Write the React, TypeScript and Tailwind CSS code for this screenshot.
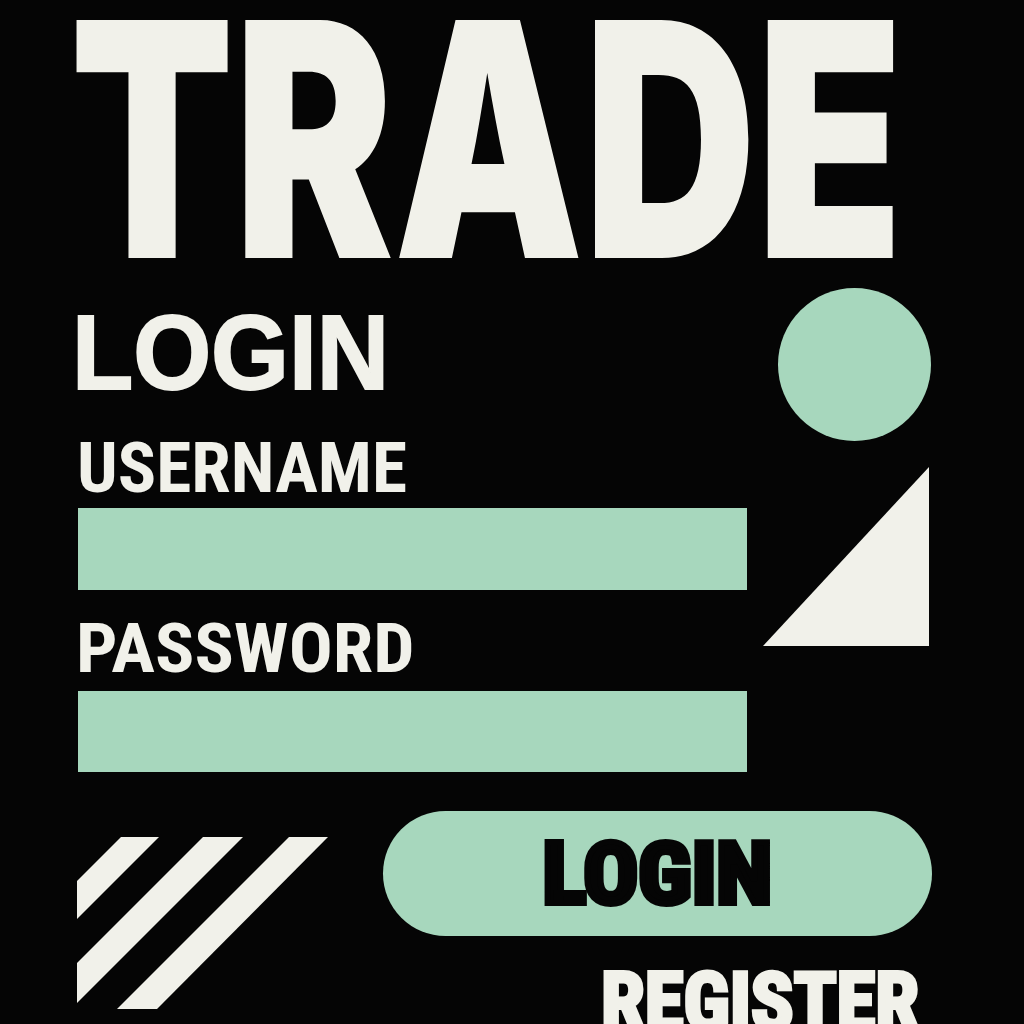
import { useState } from 'react'

const MINT = 'bg-[#a7d7bd]'

function Stripes() {
  return (
    <svg width="252" height="172" viewBox="0 0 252 172" className="shrink-0">
      <polygon points="44,0 82,0 0,82 0,44" fill="#f1f1ea" />
      <polygon points="126,0 166,0 0,166 0,126" fill="#f1f1ea" />
      <polygon points="212,0 251,0 80,172 40,172" fill="#f1f1ea" />
    </svg>
  )
}

export default function App() {
  const [username, setUsername] = useState('')
  const [password, setPassword] = useState('')

  return (
    <div className="w-[1024px] h-[1024px] overflow-hidden bg-[#050505] text-[#f1f1ea] [font-family:Liberation_Sans,Arial,sans-serif] font-bold flex flex-col">
      {/* headline */}
      <div className="h-[265px] pt-[20px] pl-[70px] shrink-0">
        <h1 className="[font-family:Inter,sans-serif] font-black text-[327px] leading-[238px] whitespace-nowrap origin-left scale-x-[0.731]">TRADE</h1>
      </div>

      {/* form + shapes */}
      <div className="h-[515px] flex shrink-0">
        <div className="w-[747px] pl-[78px] flex flex-col shrink-0">
          <h2 className="mt-[47px] -ml-[6px] text-[106px] leading-[80px] whitespace-nowrap origin-left scale-x-[0.945] [-webkit-text-stroke:2px_#f1f1ea]">LOGIN</h2>
          <label className="mt-[50px] -ml-[1px] [font-family:Roboto_Condensed,sans-serif] text-[70px] leading-[52px] whitespace-nowrap origin-left scale-x-[1.02]">USERNAME</label>
          <input
            value={username}
            onChange={e => setUsername(e.target.value)}
            className={`mt-[14px] h-[82px] w-[669px] ${MINT} outline-none px-4 text-[#050505] text-3xl`}
          />
          <label className="mt-[33px] -ml-[2px] [font-family:Roboto_Condensed,sans-serif] text-[69px] leading-[51px] whitespace-nowrap origin-left scale-x-[1.06]">PASSWORD</label>
          <input
            type="password"
            value={password}
            onChange={e => setPassword(e.target.value)}
            className={`mt-[17px] h-[81px] w-[669px] ${MINT} outline-none px-4 text-[#050505] text-3xl`}
          />
        </div>
        <div className="flex flex-col">
          <div className={`mt-[23px] ml-[31px] w-[153px] h-[153px] rounded-full ${MINT}`} />
          <svg width="166" height="179" viewBox="0 0 166 179" className="mt-[26px] ml-[16px]">
            <polygon points="166,0 166,179 0,179" fill="#f1f1ea" />
          </svg>
        </div>
      </div>

      {/* actions */}
      <div className="flex pl-[77px]">
        <div className="mt-[57px]">
          <Stripes />
        </div>
        <div className="ml-[54px] flex flex-col">
          <button className={`mt-[31px] w-[549px] h-[125px] rounded-full ${MINT} text-[#050505] flex items-center justify-center`}>
            <span className="[font-family:Roboto_Condensed,sans-serif] text-[86px] leading-[64px] whitespace-nowrap scale-x-[1.06] [-webkit-text-stroke:6px_#050505]">LOGIN</span>
          </button>
          <a className="mt-[37px] ml-[218px] [font-family:Roboto_Condensed,sans-serif] text-[79px] leading-[58px] whitespace-nowrap origin-left [-webkit-text-stroke:4px_#f1f1ea]">REGISTER</a>
        </div>
      </div>
    </div>
  )
}
